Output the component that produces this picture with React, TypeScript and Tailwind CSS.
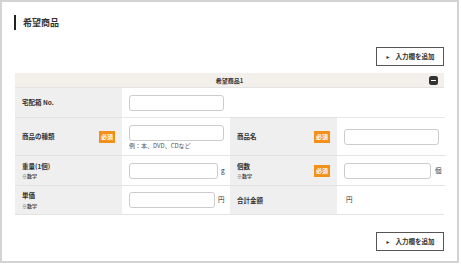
const font = { fontFamily: '"Noto Sans CJK JP", "Noto Sans", sans-serif' };

const Required = () => (
  <span className="inline-flex items-center justify-center w-[16px] h-[12px] bg-[#f39019] text-white text-[6px] font-bold leading-none">
    必須
  </span>
);

const AddButton = () => (
  <button className="flex items-center justify-center gap-[5px] w-[68px] h-[19px] border border-[#555] bg-white text-[6.5px] font-bold text-[#333]">
    <span className="text-[5px]">►</span>
    <span>入力欄を追加</span>
  </button>
);

const Label = ({ title, note, required }: { title: string; note?: string; required?: boolean }) => (
  <div className="flex items-center justify-between bg-[#efefef] pl-[7px] pr-[7px]">
    <div className="flex flex-col gap-[4px]">
      <span className="text-[6.5px] font-bold text-[#333] leading-none">{title}</span>
      {note && <span className="text-[5px] font-bold text-[#555] leading-none">{note}</span>}
    </div>
    {required && <Required />}
  </div>
);

const Input = ({ w }: { w: string }) => (
  <input className={`${w} h-[16px] rounded-[3px] border border-[#ccc] bg-white`} />
);

const App = () => {
  return (
    <div style={font} className="w-[461px] h-[264px] bg-white">
      <div className="w-[459px] h-[263px] border-2 border-[#d3d3d3] bg-white">
        <div className="flex items-center h-[15px] mt-[13px] ml-[12px]">
          <div className="w-[2px] h-[15px] bg-[#222]" />
          <span className="ml-[7px] text-[9px] font-bold text-[#333]">希望商品</span>
        </div>
        <div className="flex justify-end mt-[17px] mr-[13px]">
          <AddButton />
        </div>
        <div className="mx-[13px] mt-[7px]">
          <div className="relative flex items-center justify-center h-[15px] bg-[#f3f0ec] border-b border-[#e3e3e3]">
            <span className="text-[6px] font-bold text-[#333]">希望商品1</span>
            <span className="absolute right-[6px] top-[3px] flex items-center justify-center w-[9px] h-[9px] rounded-[2.5px] bg-[#333]">
              <span className="w-[5px] h-[1.5px] bg-white" />
            </span>
          </div>
          <div className="grid grid-cols-[107px_108px_107px_108px] border-b border-[#e3e3e3]">
            <div className="h-[29px] grid">
              <Label title="宅配箱 No." />
            </div>
            <div className="col-span-3 flex items-center pl-[7px]">
              <Input w="w-[95px]" />
            </div>

            <div className="h-[38px] grid border-t border-[#e3e3e3]">
              <Label title="商品の種類" required />
            </div>
            <div className="flex flex-col justify-center pl-[7px] pt-[1px] border-t border-[#e8e8e8]">
              <Input w="w-[95px]" />
              <span className="mt-[2px] text-[6px] text-[#555] leading-none">例：本、DVD、CDなど</span>
            </div>
            <div className="grid border-t border-[#e3e3e3]">
              <Label title="商品名" required />
            </div>
            <div className="flex items-center pl-[7px] border-t border-[#e8e8e8]">
              <Input w="w-[95px]" />
            </div>

            <div className="h-[30px] grid border-t border-[#e3e3e3]">
              <Label title="重量(1個)" note="※数字" />
            </div>
            <div className="flex items-center pl-[7px] border-t border-[#e3e3e3]">
              <Input w="w-[89px]" />
              <span className="ml-[3px] text-[6.5px] text-[#333]">g</span>
            </div>
            <div className="grid border-t border-[#e3e3e3]">
              <Label title="個数" note="※数字" required />
            </div>
            <div className="flex items-center pl-[7px] border-t border-[#e3e3e3]">
              <Input w="w-[87px]" />
              <span className="ml-[4px] text-[6.5px] text-[#333]">個</span>
            </div>

            <div className="h-[29px] grid border-t border-[#e3e3e3]">
              <Label title="単価" note="※数字" />
            </div>
            <div className="flex items-center pl-[7px] border-t border-[#e3e3e3]">
              <Input w="w-[86px]" />
              <span className="ml-[3px] text-[6.5px] text-[#333]">円</span>
            </div>
            <div className="grid border-t border-[#e3e3e3]">
              <Label title="合計金額" />
            </div>
            <div className="flex items-center pl-[9px] border-t border-[#e3e3e3]">
              <span className="text-[6.5px] text-[#333]">円</span>
            </div>
          </div>
        </div>
        <div className="flex justify-end mt-[17px] mr-[13px]">
          <AddButton />
        </div>
      </div>
    </div>
  );
};

export default App;
